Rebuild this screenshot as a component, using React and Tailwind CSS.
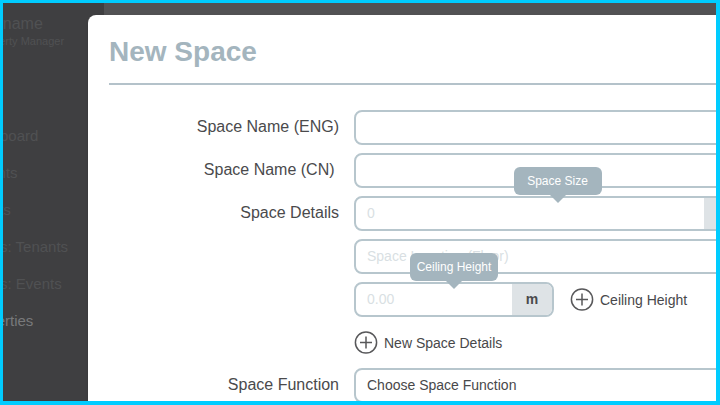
const navItems = [
  { id: "dashboard", title: "Dashboard" },
  { id: "tenants", title: "Tenants" },
  { id: "events", title: "Events" },
  { id: "forms-tenants", title: "Forms: Tenants" },
  { id: "forms-events", title: "Forms: Events" },
  { id: "properties", title: "Properties", active: true },
];

const fieldClass =
  "block w-full h-[35px] rounded-lg border-2 border-[#b7c6cd] bg-white px-[11px] pb-0.5 text-sm text-[#48484a] placeholder:text-[#d9dfe3] outline-none";
const groupClass = "flex h-[35px] overflow-hidden rounded-lg border-2 border-[#b7c6cd]";
const groupInputClass =
  "min-w-0 flex-1 px-[11px] pb-0.5 text-sm text-[#48484a] placeholder:text-[#d9dfe3] outline-none";
const labelClass = "h-[35px] text-right text-base leading-[33px] text-[#4a4a4c]";

const Sidebar = () => (
  <aside className="w-[101px] shrink-0 overflow-hidden bg-[#3f3f41] text-[#505153]">
    <div className="-ml-[34px] pt-[13px] whitespace-nowrap">
      <p className="text-base leading-4">Username</p>
      <p className="ml-[7px] text-[11px] leading-[18px]">Property Manager</p>
    </div>
    <nav className="-ml-[38px] pt-[67px]">
      <ul>
        {navItems.map((item) => (
          <li key={item.id} className="h-[37px] whitespace-nowrap text-[15px] leading-[37px]">
            <a href={`#${item.id}`} className={item.active ? "text-[#78797b]" : ""}>
              {item.title}
            </a>
          </li>
        ))}
      </ul>
    </nav>
  </aside>
);

const Tooltip = ({ children }) => (
  <div
    role="tooltip"
    className="absolute bottom-full left-1/2 z-10 mb-px flex h-7 w-[88px] -translate-x-1/2 items-center justify-center rounded-md bg-[#a4b5be] text-xs whitespace-nowrap text-white"
  >
    {children}
    <svg className="absolute top-full left-1/2 -translate-x-1/2" width="16" height="8" viewBox="0 0 16 8">
      <path d="M0 0h16L8 8z" fill="#a4b5be" />
    </svg>
  </div>
);

const AddButton = ({ children }) => (
  <button type="button" className="flex h-[35px] items-center gap-1.5 text-sm whitespace-nowrap text-[#48484a]">
    <svg width="24" height="24" viewBox="0 0 24 24" fill="none" stroke="#58585a" strokeWidth="1.5">
      <circle cx="12" cy="11.5" r="10.6" />
      <path d="M12 5.5v12M6 11.5h12" />
    </svg>
    {children}
  </button>
);

const NewSpaceModal = () => (
  <section
    role="dialog"
    aria-labelledby="modal-title"
    className="absolute top-3 -right-[66px] bottom-0 left-[85px] overflow-hidden rounded-tl-lg bg-white px-[21px] shadow-sm"
  >
    <h1 id="modal-title" className="border-b-2 border-[#b4c2ca] pt-[17px] pb-[11px] text-[28px] leading-10 font-bold text-[#a4b5be]">
      New Space
    </h1>

    <form className="grid grid-cols-[230px_1fr] gap-x-[15px] gap-y-2 pt-[25px]">
      <label htmlFor="name-eng" className={labelClass}>Space Name (ENG)</label>
      <input id="name-eng" type="text" className={fieldClass} />

      <label htmlFor="name-cn" className={labelClass}>Space Name (CN)&nbsp;</label>
      <input id="name-cn" type="text" className={fieldClass} />

      <label htmlFor="space-size" className={labelClass}>Space Details</label>
      <div className="flex flex-col gap-2">
        <div className="relative">
          <Tooltip>Space Size</Tooltip>
          <div className={groupClass}>
            <input id="space-size" type="text" placeholder="0" className={groupInputClass} />
            <span className="w-[55px] bg-[#dee3e6]" />
          </div>
        </div>

        <input type="text" aria-label="Space Location" placeholder="Space Location (Floor)" className={fieldClass} />

        <div className="flex gap-4">
          <div className="relative w-[200px]">
            <Tooltip>Ceiling Height</Tooltip>
            <div className={groupClass}>
              <input type="text" aria-label="Ceiling Height" placeholder="0.00" className={groupInputClass} />
              <span className="w-10 bg-[#dee3e6] text-center text-sm leading-[31px] font-bold text-[#4a4a4c]">m</span>
            </div>
          </div>
          <AddButton>Ceiling Height</AddButton>
        </div>

        <AddButton>New Space Details</AddButton>
      </div>

      <label htmlFor="space-function" className={labelClass}>Space Function</label>
      <select id="space-function" className={`${fieldClass} appearance-none`}>
        <option>Choose Space Function</option>
      </select>
    </form>
  </section>
);

const App = () => {
  return (
    <div className="relative flex h-screen overflow-hidden border-t-3 border-r-4 border-b-4 border-l-3 border-[#00ccff] bg-[#525254] font-['Liberation_Sans',Arial,sans-serif]">
      <Sidebar />
      <NewSpaceModal />
    </div>
  );
};

export default App;
